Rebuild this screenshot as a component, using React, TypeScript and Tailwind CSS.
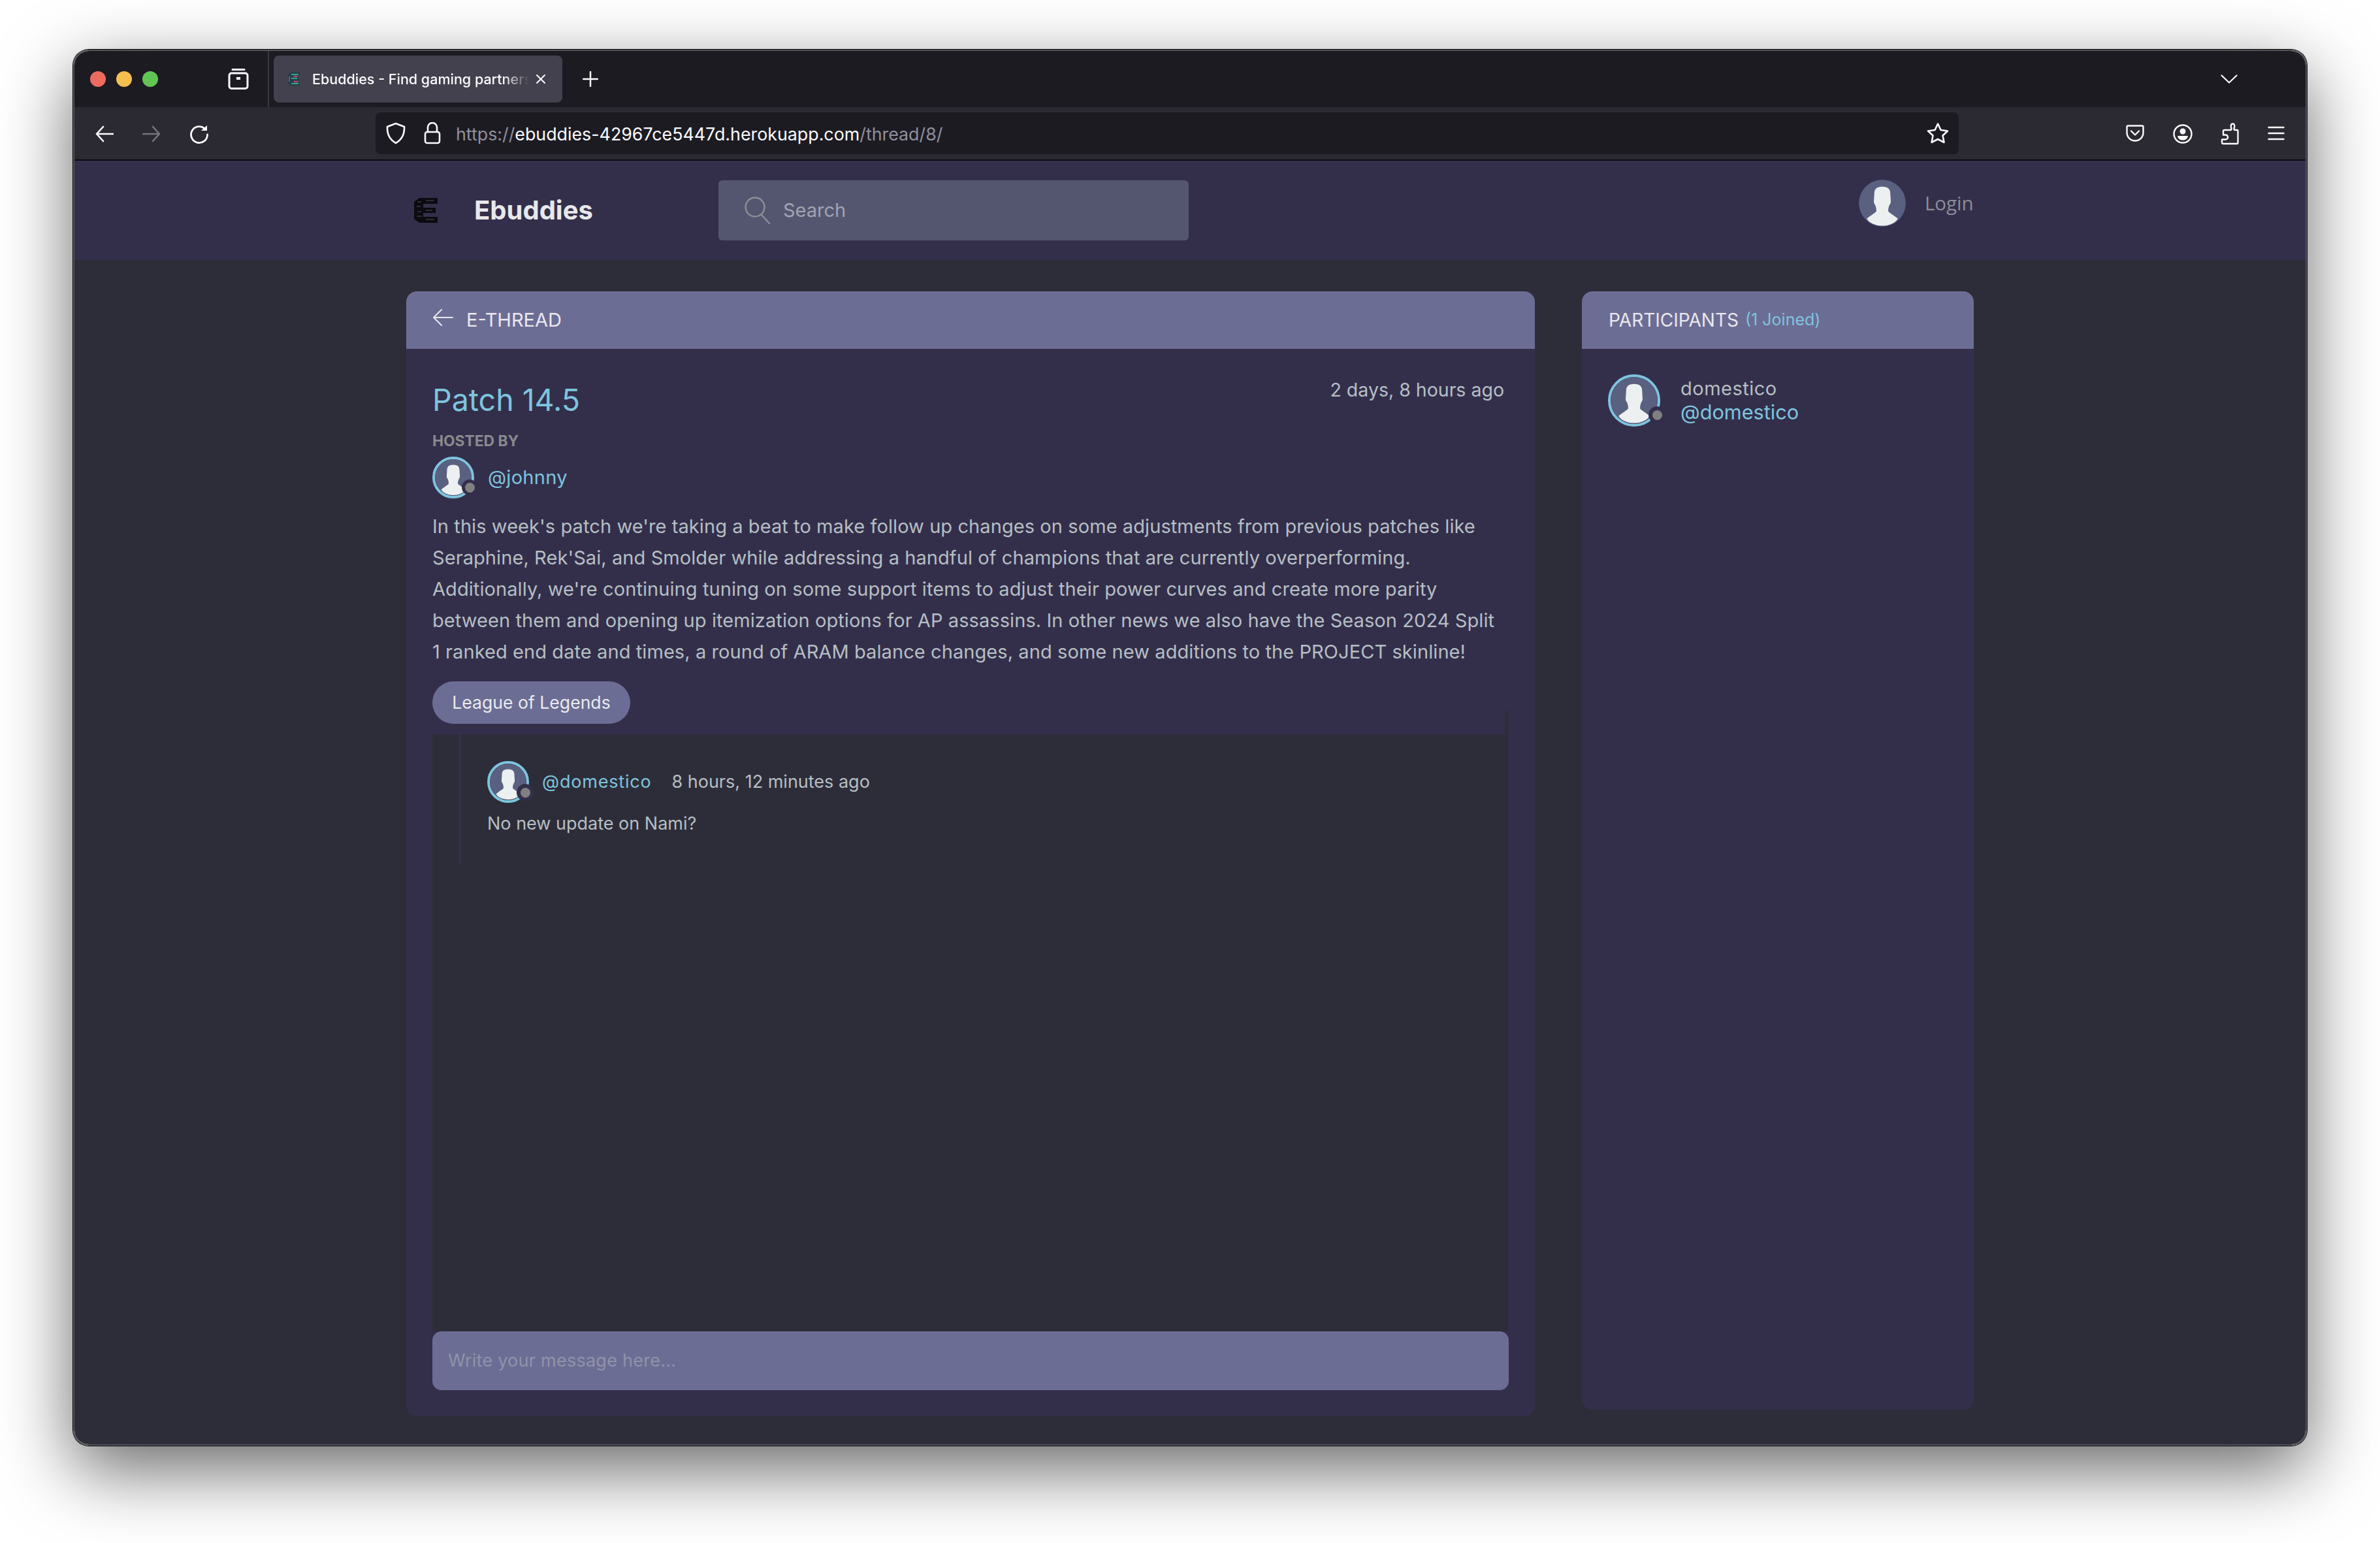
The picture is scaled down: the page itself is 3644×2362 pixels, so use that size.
const paragraph =
  "In this week's patch we're taking a beat to make follow up changes on some adjustments from previous patches like Seraphine, Rek'Sai, and Smolder while addressing a handful of champions that are currently overperforming. Additionally, we're continuing tuning on some support items to adjust their power curves and create more parity between them and opening up itemization options for AP assassins. In other news we also have the Season 2024 Split 1 ranked end date and times, a round of ARAM balance changes, and some new additions to the PROJECT skinline!";

function Avatar({ className, dot }: { className: string; dot?: string }) {
  return (
    <div className={`relative shrink-0 ${className}`}>
      <svg viewBox="0 0 100 100" className="h-full w-full rounded-full">
        <circle cx="50" cy="50" r="50" fill="#5a6180" />
        <path
          d="M50 15C38 15 33 20 33 30L32 46C32 50 33 52 35 54C37 60 38 64 37 68C30 74 22 78 17 83C28 103 72 103 83 83C78 78 70 74 63 68C62 64 63 60 65 54C67 52 68 50 68 46L67 30C67 20 62 15 50 15Z"
          fill="#ecf0f1"
        />
      </svg>
      {dot && (
        <span className={`absolute flex h-[26px] w-[26px] items-center justify-center rounded-full bg-[#332f4b] ${dot}`}>
          <span className="h-[15px] w-[15px] rounded-full bg-[#808080]" />
        </span>
      )}
    </div>
  );
}

function Logo() {
  return (
    <svg viewBox="0 0 36 38" className="h-[38px] w-[36px] shrink-0">
      <path d="M8 0H36V9H14V15H33V23H14V29H36V38H8L0 32V6Z" fill="#0b0b10" />
      <path d="M5 6H11M4 13H10M5 21H11M4 28H12M18 4H30M18 19H28M18 33H31" stroke="#3a3a44" strokeWidth="1.5" />
    </svg>
  );
}

function Favicon() {
  return (
    <svg viewBox="0 0 18 20" className="h-[20px] w-[18px] shrink-0">
      <path d="M4 0H18V4H8V8H16V12H8V16H18V20H4L0 17V3Z" fill="#1f3f4a" />
      <path d="M5 3H16M5 9H14M5 17H16" stroke="#3fc4a0" strokeWidth="1.4" />
      <path d="M2 6V14M9 6H14M9 14H15" stroke="#c9487c" strokeWidth="1.4" />
    </svg>
  );
}

function Icon({ className, children, box }: { className: string; children: React.ReactNode; box: string }) {
  return (
    <svg viewBox={box} className={`shrink-0 ${className}`} fill="none" stroke="currentColor" strokeWidth="3" strokeLinecap="round" strokeLinejoin="round">
      {children}
    </svg>
  );
}

function TabStrip() {
  return (
    <div className="flex h-[86px] shrink-0 items-center bg-[#1c1b22]">
      <div className="ml-[24px] flex gap-[16px]">
        <span className="h-[24px] w-[24px] rounded-full bg-[#ed6a5e]" />
        <span className="h-[24px] w-[24px] rounded-full bg-[#f4bf4f]" />
        <span className="h-[24px] w-[24px] rounded-full bg-[#61c554]" />
      </div>
      <Icon box="0 0 32 32" className="ml-[107px] h-[32px] w-[32px] text-[#fbfbfe]">
        <rect x="2" y="7" width="28" height="23.5" rx="3.5" />
        <path d="M7 1.5H25" />
        <path d="M13 15H19" strokeWidth="4" strokeLinecap="butt" />
      </Icon>
      <div className="ml-[29px] h-full w-[2px] bg-[#3a3942]" />
      <div className="ml-[7px] flex h-[72px] w-[442px] items-center rounded-[8px] bg-[#42414d] pl-[22px]">
        <Favicon />
        <span className="ml-[19px] w-[332px] overflow-hidden whitespace-nowrap text-[21.5px] font-medium text-[#fbfbfe] [mask-image:linear-gradient(to_right,black_88%,transparent)]">
          Ebuddies - Find gaming partners
        </span>
        <Icon box="0 0 16 16" className="ml-[10px] h-[16px] w-[16px] text-[#fbfbfe]">
          <path d="M2 2L14 14M14 2L2 14" strokeWidth="2" />
        </Icon>
      </div>
      <Icon box="0 0 24 24" className="ml-[31px] h-[24px] w-[24px] text-[#fbfbfe]">
        <path d="M12 1V23M1 12H23" strokeWidth="2.5" />
      </Icon>
      <Icon box="0 0 26 14" className="ml-[2484px] h-[14px] w-[26px] text-[#fbfbfe]">
        <path d="M1.5 1.5L13 12.5L24.5 1.5" strokeWidth="2.2" />
      </Icon>
    </div>
  );
}

function Toolbar() {
  return (
    <div className="flex h-[82px] shrink-0 items-start border-b-2 border-[#0b0b0f] bg-[#2b2a33] pt-[8px]">
      <Icon box="0 0 28 26" className="ml-[32px] mt-[20px] h-[26px] w-[28px] text-[#fbfbfe]">
        <path d="M27 13H2M12 2L2 13L12 24" strokeWidth="2.6" />
      </Icon>
      <Icon box="0 0 28 26" className="ml-[44px] mt-[20px] h-[26px] w-[28px] text-[#75757c]">
        <path d="M1 13H26M16 2L26 13L16 24" strokeWidth="2.6" />
      </Icon>
      <Icon box="0 0 30 30" className="ml-[44px] mt-[19px] h-[30px] w-[30px] text-[#fbfbfe]">
        <path d="M23 5.5A12.5 12.5 0 1 0 27.5 15" strokeWidth="2.8" />
        <path d="M18 9H27V1Z" fill="currentColor" stroke="none" />
      </Icon>
      <div className="ml-[255px] flex h-[64px] w-[2424px] items-center rounded-[8px] bg-[#1c1b22] pl-[16px]">
        <Icon box="0 0 30 34" className="h-[34px] w-[30px] text-[#fbfbfe]">
          <path d="M15 2L28 7C28.5 18 24 27 15 32C6 27 1.5 18 2 7Z" strokeWidth="2.6" />
        </Icon>
        <Icon box="0 0 26 34" className="ml-[28px] h-[34px] w-[26px] text-[#fbfbfe]">
          <path d="M6 15V8A7 7 0 0 1 20 8V15" strokeWidth="2.6" />
          <rect x="2" y="15" width="22" height="17" rx="3" strokeWidth="2.6" />
        </Icon>
        <span className="ml-[23px] mt-[2px] whitespace-nowrap text-[26.8px] text-[#fbfbfe]">
          <span className="text-[#8f8f9d]">https://</span>
          ebuddies-42967ce5447d.herokuapp.com
          <span className="text-[#8f8f9d]">/thread/8/</span>
        </span>
        <Icon box="0 0 34 34" className="ml-auto mr-[15px] h-[34px] w-[34px] text-[#fbfbfe]">
          <path d="M17 2.5L21.5 12L32 13.5L24.5 20.5L26.5 31L17 26L7.5 31L9.5 20.5L2 13.5L12.5 12Z" strokeWidth="2.6" />
        </Icon>
      </div>
      <Icon box="0 0 28 26" className="ml-[256px] mt-[19px] h-[26px] w-[28px] text-[#fbfbfe]">
        <path d="M3 1.5H25A1.5 1.5 0 0 1 26.5 3V12A12.5 12.5 0 0 1 1.5 12V3A1.5 1.5 0 0 1 3 1.5Z" strokeWidth="2.4" />
        <path d="M8 9.5L14 15.5L20 9.5" strokeWidth="2.4" />
      </Icon>
      <Icon box="0 0 30 30" className="ml-[44px] mt-[18px] h-[30px] w-[30px] text-[#fbfbfe]">
        <circle cx="15" cy="15" r="13.5" strokeWidth="2.4" />
        <circle cx="15" cy="11" r="4.5" fill="currentColor" stroke="none" />
        <path d="M7 18H23C22 23 19 24.5 15 24.5C11 24.5 8 23 7 18Z" fill="currentColor" stroke="none" />
      </Icon>
      <Icon box="0 0 28 34" className="ml-[43px] mt-[16px] h-[34px] w-[28px] text-[#fbfbfe]">
        <path d="M10 11H15.5C17 11 16.5 8.5 16 7C15.5 5 15.5 1.5 18.5 1.5C21.5 1.5 21.5 5 21 7C20.5 8.5 20 11 21.5 11H25C26 11 26.5 12 26.5 13V30C26.5 31.5 26 32 25 32H4C3 32 2 31.5 2 30V25.5H7C10 25.5 11 24 11 22C11 20 10 18.5 7 18.5H4V13C4 12 5 11 6 11Z" strokeWidth="2.4" />
      </Icon>
      <Icon box="0 0 26 22" className="ml-[44px] mt-[21px] h-[22px] w-[26px] text-[#fbfbfe]">
        <path d="M1.5 2H24.5M1.5 11H24.5M1.5 20H24.5" strokeWidth="2.4" />
      </Icon>
    </div>
  );
}

function SiteNav() {
  return (
    <div className="flex h-[152px] shrink-0 items-center bg-[#332f4b]">
      <div className="ml-[520px]">
        <Logo />
      </div>
      <span className="ml-[56px] text-[40px] leading-none font-bold text-[#e8e8ea]">Ebuddies</span>
      <div className="ml-[192px] flex h-[92px] w-[720px] items-center rounded-[6px] bg-[#54566f] pl-[40px]">
        <Icon box="0 0 40 42" className="h-[42px] w-[40px] text-[#8f8f95]">
          <circle cx="16" cy="16" r="14.5" strokeWidth="2.4" />
          <path d="M26 28L38 41" strokeWidth="2.4" />
        </Icon>
        <span className="ml-[19px] text-[29px] text-[#a2a3b1]">Search</span>
      </div>
      <div className="mb-[22px] ml-[1026px] flex items-center">
        <Avatar className="h-[72px] w-[72px]" />
        <span className="ml-[29px] font-['Open_Sans',sans-serif] text-[29.5px] text-[#8d8d97]">Login</span>
      </div>
    </div>
  );
}

function ThreadPanel() {
  return (
    <div className="flex h-[1722px] w-[1728px] flex-col rounded-[16px] bg-[#332f4b]">
      <div className="flex h-[88px] shrink-0 items-center rounded-t-[16px] bg-[#6c6d94] pl-[40px]">
        <Icon box="0 0 32 28" className="mb-[8px] h-[28px] w-[32px] text-[#e8e8ee]">
          <path d="M31 14H2M14 2L2 14L14 26" strokeWidth="2" />
        </Icon>
        <span className="ml-[20px] text-[29px] text-[#e8e8ee]">E-THREAD</span>
      </div>
      <div className="flex flex-1 flex-col px-[40px] pt-[39px] pb-[40px]">
        <div className="flex items-start justify-between pr-[7px]">
          <h1 className="mt-[9px] text-[46.5px] leading-[60px] text-[#7ec4de]">Patch 14.5</h1>
          <span className="text-[28.5px] leading-[48px] text-[#b6bfc3]">2 days, 8 hours ago</span>
        </div>
        <p className="mt-[18px] text-[22.8px] leading-[30px] font-bold text-[#8a8a8e]">HOSTED BY</p>
        <div className="mt-[9px] flex items-center">
          <Avatar
            className="h-[64px] w-[64px] rounded-full border-[4px] border-[#7ec4de]"
            dot="right-[-9px] bottom-[1px] !h-[24px] !w-[24px]"
          />
          <span className="ml-[21px] text-[29px] tracking-[0.3px] text-[#7ec4de]">@johnny</span>
        </div>
        <p className="mt-[19px] w-[1640px] text-[29px] leading-[48px] tracking-[0.08px] text-[#b6bfc3]">{paragraph}</p>
        <span className="mt-[21px] flex h-[65px] w-[303px] items-center justify-center rounded-full bg-[#6c6d94] text-[26.6px] text-[#e8ebee]">
          League of Legends
        </span>
        <div className="relative mt-[16px] h-[914px] bg-[#2d2d39]">
          <div className="absolute -top-[37px] right-0 h-[37px] w-[6px] rounded-tr-[10px] bg-[#2d2d39]" />
          <div className="ml-[40px] h-[199px] border-l-[4px] border-[#332f4b] pl-[40px] pt-[41px]">
            <div className="flex items-center">
              <Avatar
                className="h-[64px] w-[64px] rounded-full border-[4px] border-[#7ec4de]"
                dot="right-[-11px] bottom-[-1px]"
              />
              <span className="ml-[20px] mt-[1px] text-[27px] tracking-[0.8px] text-[#7ec4de]">@domestico</span>
              <span className="ml-[31px] mt-[1px] text-[27px] text-[#b6bfc3]">8 hours, 12 minutes ago</span>
            </div>
            <p className="mt-[12px] text-[27px] leading-[40px] text-[#b6bfc3]">No new update on Nami?</p>
          </div>
        </div>
        <div className="flex h-[90px] shrink-0 items-center rounded-[14px] bg-[#6c6d94] pl-[24px] text-[27px] tracking-[0.25px] text-[#9093a8]">
          Write your message here...
        </div>
      </div>
    </div>
  );
}

function ParticipantsPanel() {
  return (
    <div className="h-[1712px] w-[600px] rounded-[16px] bg-[#332f4b]">
      <div className="flex h-[88px] items-center rounded-t-[16px] bg-[#6c6d94] pl-[41px]">
        <span className="text-[28px] text-[#e8e8ee]">PARTICIPANTS</span>
        <span className="ml-[10px] text-[25px] text-[#7ec4de]">(1 Joined)</span>
      </div>
      <div className="flex items-center pl-[40px] pt-[39px]">
        <Avatar
          className="h-[80px] w-[80px] rounded-full border-[4px] border-[#7ec4de]"
          dot="right-[-12px] bottom-[1px]"
        />
        <div className="ml-[31px] flex flex-col">
          <span className="text-[29px] leading-[36px] tracking-[0.5px] text-[#b6bfc3]">domestico</span>
          <span className="text-[30.7px] leading-[36px] text-[#7ec4de]">@domestico</span>
        </div>
      </div>
    </div>
  );
}

export default function App() {
  return (
    <div className="h-[2362px] w-[3644px] overflow-hidden bg-white pl-[112px] pt-[76px] font-['Inter',sans-serif]">
      <div className="flex h-[2137px] w-[3420px] flex-col overflow-hidden rounded-[24px] border-2 border-[#55555d] shadow-[0_0_0_1px_#000,0_36px_110px_rgba(0,0,0,0.6)]">
        <TabStrip />
        <Toolbar />
        <SiteNav />
        <div className="flex flex-1 items-start gap-[72px] bg-[#2d2d39] pl-[508px] pt-[48px]">
          <ThreadPanel />
          <ParticipantsPanel />
        </div>
      </div>
    </div>
  );
}
